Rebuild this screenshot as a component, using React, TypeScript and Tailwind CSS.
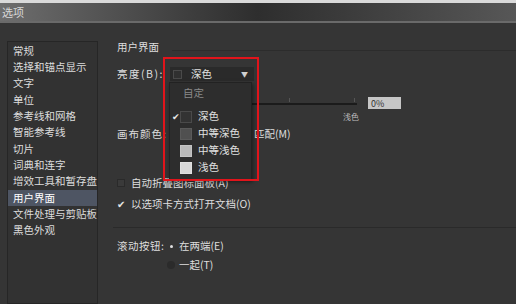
const font = "font-['Noto_Sans_CJK_SC','Liberation_Sans',sans-serif]";

const navItems = [
  "常规",
  "选择和锚点显示",
  "文字",
  "单位",
  "参考线和网格",
  "智能参考线",
  "切片",
  "词典和连字",
  "增效工具和暂存盘",
  "用户界面",
  "文件处理与剪贴板",
  "黑色外观",
];

const themes = [
  { name: "深色", swatch: "bg-[#333333] border-[#4a4a4a]", checked: true },
  { name: "中等深色", swatch: "bg-[#505050] border-[#5a5a5a]", checked: false },
  { name: "中等浅色", swatch: "bg-[#b9b9b9] border-[#c4c4c4]", checked: false },
  { name: "浅色", swatch: "bg-[#d8d8d8] border-[#e0e0e0]", checked: false },
];

function Sidebar() {
  return (
    <div className="ml-[7px] mt-[18px] w-[91px] border border-[#262626] bg-[#323232] pt-[1px]">
      {navItems.map((item) => (
        <div
          key={item}
          className={`flex h-[16.3px] items-center pl-[5px] text-[10.5px] leading-none ${
            item === "用户界面" ? "bg-[#4e5563] text-white" : "text-[#dcdcdc]"
          }`}
        >
          {item}
        </div>
      ))}
    </div>
  );
}

function ThemeDropdown() {
  return (
    <div className="relative h-[14px] w-[84px]">
      {/* closed select */}
      <div className="flex h-full items-center bg-[#2a2a2a] pl-[3px] pr-[6px]">
        <span className="h-[9px] w-[9px] border border-[#4a4a4a] bg-[#303030]" />
        <span className="ml-[9px] flex-1 text-[10.5px] leading-none text-[#e0e0e0]">深色</span>
        <span className="text-[7px] leading-none text-[#d0d0d0]">▼</span>
      </div>

      {/* open list */}
      <div className="absolute left-[-1px] top-[15px] z-10 w-[83px] border border-[#222] bg-[#2d2d2d] pb-[3px] shadow-[1px_2px_4px_rgba(0,0,0,0.5)]">
        <div className="flex h-[21px] items-center pl-[13px] text-[10.5px] leading-none text-[#8a8a8a]">
          自定
        </div>
        <div className="h-[4px]" />
        {themes.map((t) => (
          <div key={t.name} className="flex h-[17px] items-center">
            <span className="w-[10px] pl-[2px] text-[9px] leading-none text-[#e8e8e8]">
              {t.checked ? "✔" : ""}
            </span>
            <span className={`h-[12px] w-[12px] border ${t.swatch}`} />
            <span className="ml-[6px] text-[10.5px] leading-none text-[#e0e0e0]">{t.name}</span>
          </div>
        ))}
      </div>
    </div>
  );
}

export default function App() {
  return (
    <div className={`${font} h-[304px] w-[516px] overflow-hidden bg-[#353535]`}>
      {/* window chrome */}
      <div className="h-[3px] bg-[#dadada]" />
      <div className="flex h-[18px] items-center bg-gradient-to-r from-[#6e6e6e] via-[#2e2e2e] to-[#575757]">
        <span className="ml-[2px] text-[11px] leading-none text-[#d8d8d8]">选项</span>
      </div>
      <div className="h-[2px] bg-[#6a6a6a]" />

      <div className="relative flex h-[281px]">
        <Sidebar />

        {/* settings pane */}
        <div className="flex flex-1 flex-col pl-[19px] text-[10.5px] leading-none text-[#dedede]">
          <div className="mt-[17px] flex h-[14px] items-center">
            <span>用户界面</span>
            <div className="ml-[13px] mt-[6px] h-px flex-1 bg-[#2c2c2c]" />
          </div>

          <div className="mt-[13px] flex h-[14px] items-center">
            <span className="w-[53px] shrink-0 whitespace-nowrap tracking-[1.5px]">亮度(B):</span>
            <ThemeDropdown />
          </div>

          {/* slider */}
          <div className="mt-[16px] flex h-[12px] items-center">
            <div className="relative ml-[58px] h-[12px] w-[182px]">
              <div className="absolute bottom-[4px] left-0 right-0 h-[2px] bg-[#1b1b1b]" />
              <div className="absolute left-[114px] top-[1px] h-[4px] w-px bg-[#555]" />
              <div className="absolute right-[2px] top-[1px] h-[4px] w-px bg-[#555]" />
            </div>
            <div className="ml-[11px] flex h-[12px] w-[33px] items-center bg-[#c6c6c6] pl-[3px] text-[9px] text-[#333]">
              0%
            </div>
          </div>
          <div className="mt-[3px] flex h-[10px] items-center">
            <span className="ml-[226px] text-[8px] text-[#bdbdbd]">浅色</span>
          </div>

          <div className="mt-[5px] flex h-[14px] items-center">
            <span className="w-[137px] shrink-0 whitespace-nowrap tracking-[1px]">画布颜色:</span>
            <span className="whitespace-nowrap">匹配(M)</span>
          </div>

          <div className="mt-[35px] flex h-[14px] items-center">
            <span className="h-[8px] w-[8px] border border-[#2a2a2a] bg-[#3a3a3a]" />
            <span className="ml-[6px]">自动折叠图标面板(A)</span>
          </div>

          <div className="mt-[7px] flex h-[14px] items-center">
            <span className="w-[10px] text-[10px] text-[#e6e6e6]">✔</span>
            <span className="ml-[4px]">以选项卡方式打开文档(O)</span>
          </div>

          <div className="ml-[-4px] mt-[16px] h-px bg-[#2a2a2a]" />

          <div className="mt-[11px] flex h-[14px] items-center">
            <span className="w-[50px] shrink-0 whitespace-nowrap tracking-[0.5px]">滚动按钮:</span>
            <span className="flex h-[8px] w-[8px] items-center justify-center">
              <span className="h-[3px] w-[3px] rounded-full bg-[#e0e0e0]" />
            </span>
            <span className="ml-[4px]">在两端(E)</span>
          </div>
          <div className="mt-[5px] flex h-[14px] items-center">
            <span className="ml-[50px] h-[8px] w-[8px] rounded-full bg-[#2b2b2b]" />
            <span className="ml-[4px]">一起(T)</span>
          </div>
        </div>

        {/* annotation box */}
        <div className="pointer-events-none absolute left-[163px] top-[34px] z-20 h-[124px] w-[96px] border-2 border-[#e1141b]" />
      </div>
    </div>
  );
}
